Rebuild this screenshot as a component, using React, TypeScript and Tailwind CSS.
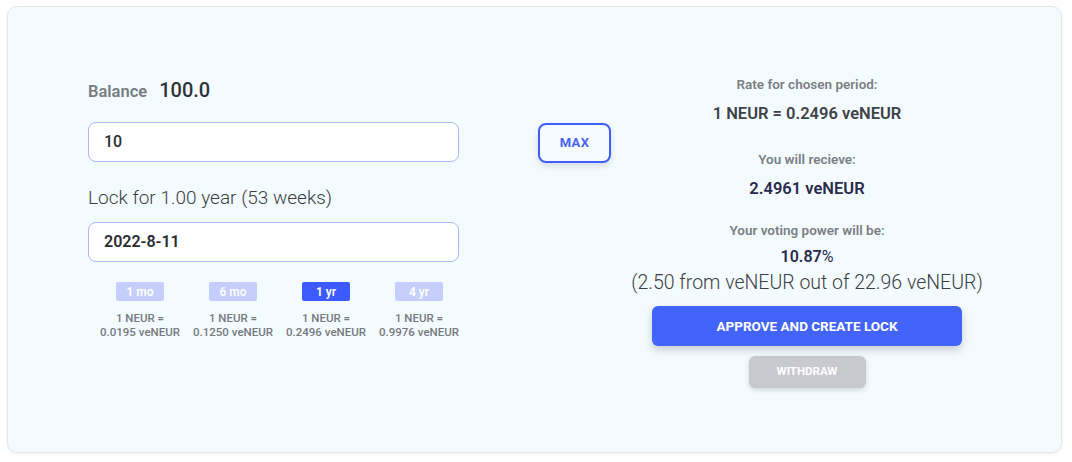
import React from 'react';

const periods = [
  { label: '1 mo', rate: '0.0195', active: false },
  { label: '6 mo', rate: '0.1250', active: false },
  { label: '1 yr', rate: '0.2496', active: true },
  { label: '4 yr', rate: '0.9976', active: false },
];

export default function App() {
  return (
    <div className="w-[1072px] h-[462px] bg-white pt-[6px] pl-[7px]" style={{ fontFamily: 'Roboto, "Liberation Sans", sans-serif' }}>
      <div className="w-[1055px] h-[447px] rounded-[10px] border border-[#e4e7ea] bg-[#f3fbff] shadow-[0_1px_3px_rgba(0,0,0,0.06)] flex items-start pl-[80px] pt-[68px]">
        {/* left side */}
        <div className="w-[371px] flex flex-col">
          <div className="flex items-baseline gap-[12px] h-[24px]">
            <span className="text-[16.5px] font-semibold text-[#777b80]">Balance</span>
            <span className="text-[20px] font-medium text-[#2f3336]">100.0</span>
          </div>
          <div className="mt-[23px] h-[40px] rounded-[8px] border border-[#a9b9f7] bg-white flex items-center pl-[15px] text-[16px] font-medium text-[#2b2d30]">
            10
          </div>
          <div className="mt-[24px] text-[19px] font-light text-[#3b3e42] h-[24px] leading-[24px]">
            Lock for 1.00 year (53 weeks)
          </div>
          <div className="mt-[12px] h-[40px] rounded-[8px] border border-[#a9b9f7] bg-white flex items-center pl-[15px] text-[16px] font-semibold text-[#2b2d30]">
            2022-8-11
          </div>
          <div className="mt-[20px] flex pl-[28px] gap-[45px]">
            {periods.map((p) => (
              <div key={p.label} className="w-[48px] flex flex-col items-center">
                <div
                  className={`w-[48px] h-[19px] rounded-[2px] flex items-center justify-center text-[12px] font-semibold text-white ${
                    p.active ? 'bg-[#3d5afe]' : 'bg-[#c5cefc]'
                  }`}
                >
                  {p.label}
                </div>
                <div className="mt-[10px] text-[11.5px] leading-[14px] font-medium text-[#76797e] text-center whitespace-nowrap">
                  1 NEUR =
                  <br />
                  {p.rate} veNEUR
                </div>
              </div>
            ))}
          </div>
        </div>

        {/* max */}
        <button className="ml-[79px] mt-[48px] w-[73px] h-[40px] rounded-[8px] border-2 border-[#3f5ef8] bg-[#f6fbff] text-[#4a62f0] text-[13px] font-bold tracking-wide shadow-[0_3px_6px_rgba(0,0,0,0.12)]">
          MAX
        </button>

        {/* right side */}
        <div className="ml-[1px] w-[390px] flex flex-col items-center text-center">
          <div className="text-[13.5px] font-semibold text-[#7b7e83] leading-[18px]">Rate for chosen period:</div>
          <div className="mt-[11px] text-[16.5px] font-semibold text-[#3f4246] leading-[20px]">1 NEUR = 0.2496 veNEUR</div>
          <div className="mt-[26px] text-[13.5px] font-semibold text-[#7b7e83] leading-[18px]">You will recieve:</div>
          <div className="mt-[11px] text-[16.5px] font-semibold text-[#2b2a4c] leading-[20px]">2.4961 veNEUR</div>
          <div className="mt-[22px] text-[13.5px] font-semibold text-[#7b7e83] leading-[18px]">Your voting power will be:</div>
          <div className="mt-[7px] text-[16px] font-semibold text-[#2b2a4c] leading-[22px]">
            10.87<span className="font-normal">%</span>
          </div>
          <div className="mt-[2px] text-[19.5px] font-light text-[#3b3e42] leading-[26px] whitespace-nowrap">
            (2.50 from veNEUR out of 22.96 veNEUR)
          </div>
          <button className="mt-[10px] w-[310px] h-[40px] rounded-[6px] bg-[#4264fb] text-white text-[13.5px] font-bold shadow-[0_4px_8px_rgba(0,0,0,0.18)]">
            APPROVE AND CREATE LOCK
          </button>
          <button className="mt-[10px] w-[117px] h-[32px] rounded-[6px] bg-[#c8c9ce] text-white text-[11.5px] font-bold shadow-[0_2px_5px_rgba(0,0,0,0.15)]">
            WITHDRAW
          </button>
        </div>
      </div>
    </div>
  );
}
